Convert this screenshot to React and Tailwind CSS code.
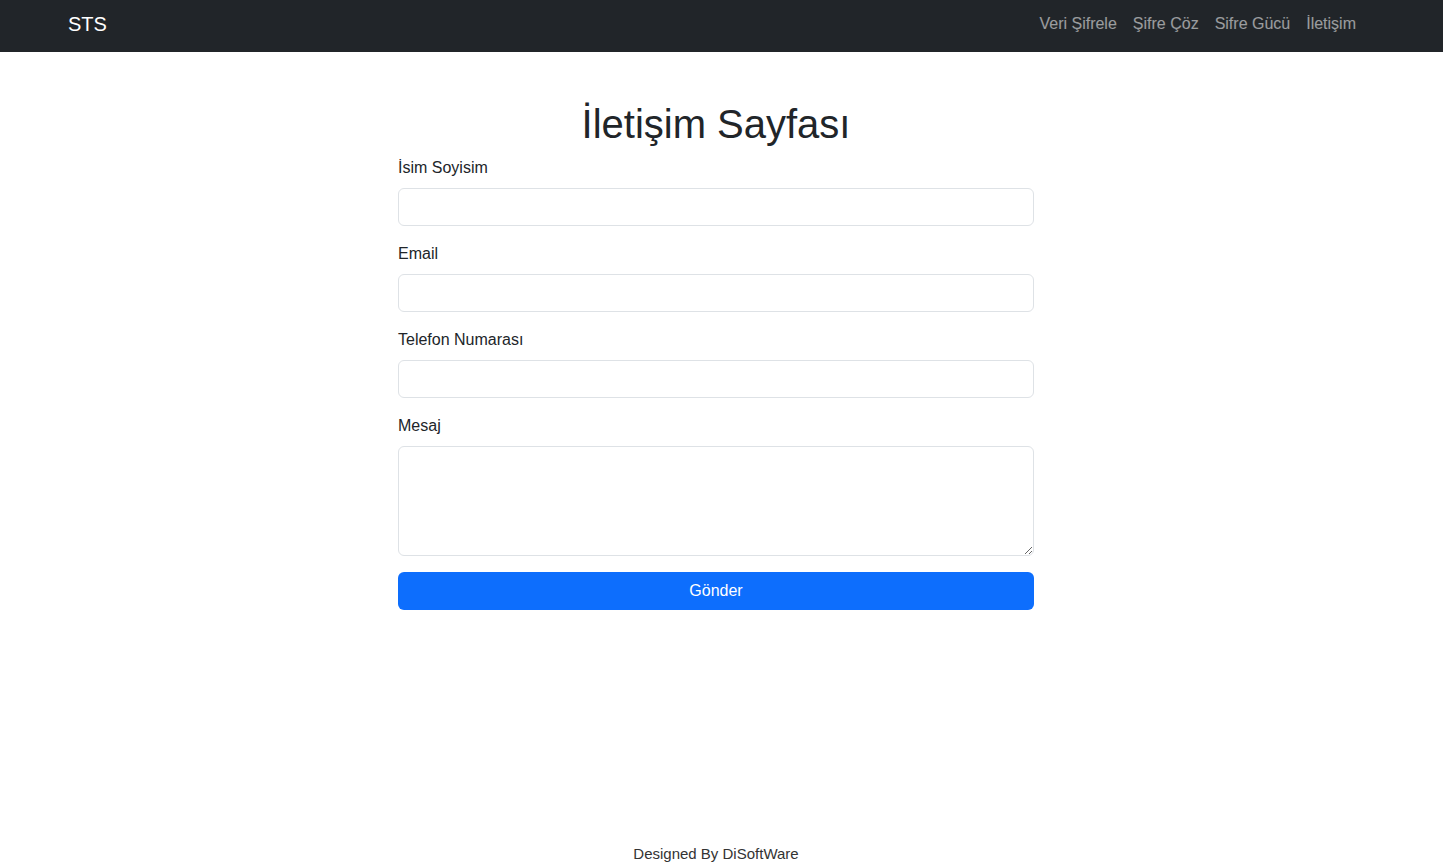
export default function App() {
  const links = ["Veri Şifrele", "Şifre Çöz", "Sifre Gücü", "İletişim"];
  const fields = [
    { label: "İsim Soyisim", type: "text" },
    { label: "Email", type: "email" },
    { label: "Telefon Numarası", type: "tel" },
  ];

  return (
    <div className="flex h-[862px] flex-col overflow-hidden bg-white font-['Liberation_Sans',Arial,sans-serif] text-[#212529]">
      <nav className="flex h-[52px] shrink-0 items-center justify-between bg-[#212529] pb-1 pl-[68px] pr-[79px]">
        <a className="text-[20px] leading-[30px] text-white">STS</a>
        <ul className="flex">
          {links.map((l) => (
            <li key={l}>
              <a className="block px-2 text-[16px] leading-6 text-white/55">{l}</a>
            </li>
          ))}
        </ul>
      </nav>

      <main className="pr-[11px]">
        <div className="mx-auto w-[636px]">
          <h1 className="mt-[48px] mb-[8px] text-center text-[40px] leading-[48px] font-normal">İletişim Sayfası</h1>
          <form onSubmit={(e) => e.preventDefault()}>
            {fields.map((f) => (
              <div key={f.label} className="mb-4">
                <label className="mb-2 block text-[16px] leading-6">{f.label}</label>
                <input
                  type={f.type}
                  className="block h-[38px] w-full rounded-[6px] border border-[#dee2e6] bg-white px-3 text-[16px] outline-none"
                />
              </div>
            ))}
            <div className="mb-4">
              <label className="mb-2 block text-[16px] leading-6">Mesaj</label>
              <textarea className="block h-[110px] w-full rounded-[6px] border border-[#dee2e6] bg-white px-3 py-1.5 text-[16px] outline-none" />
            </div>
            <button
              type="submit"
              className="block h-[38px] w-full rounded-[6px] bg-[#0d6efd] text-[16px] text-white"
            >
              Gönder
            </button>
          </form>
        </div>
      </main>

      <footer className="mt-auto mb-[-4px] pr-[11px] text-center text-[15px] leading-6 text-[#333]">
        Designed By DiSoftWare
      </footer>
    </div>
  );
}
